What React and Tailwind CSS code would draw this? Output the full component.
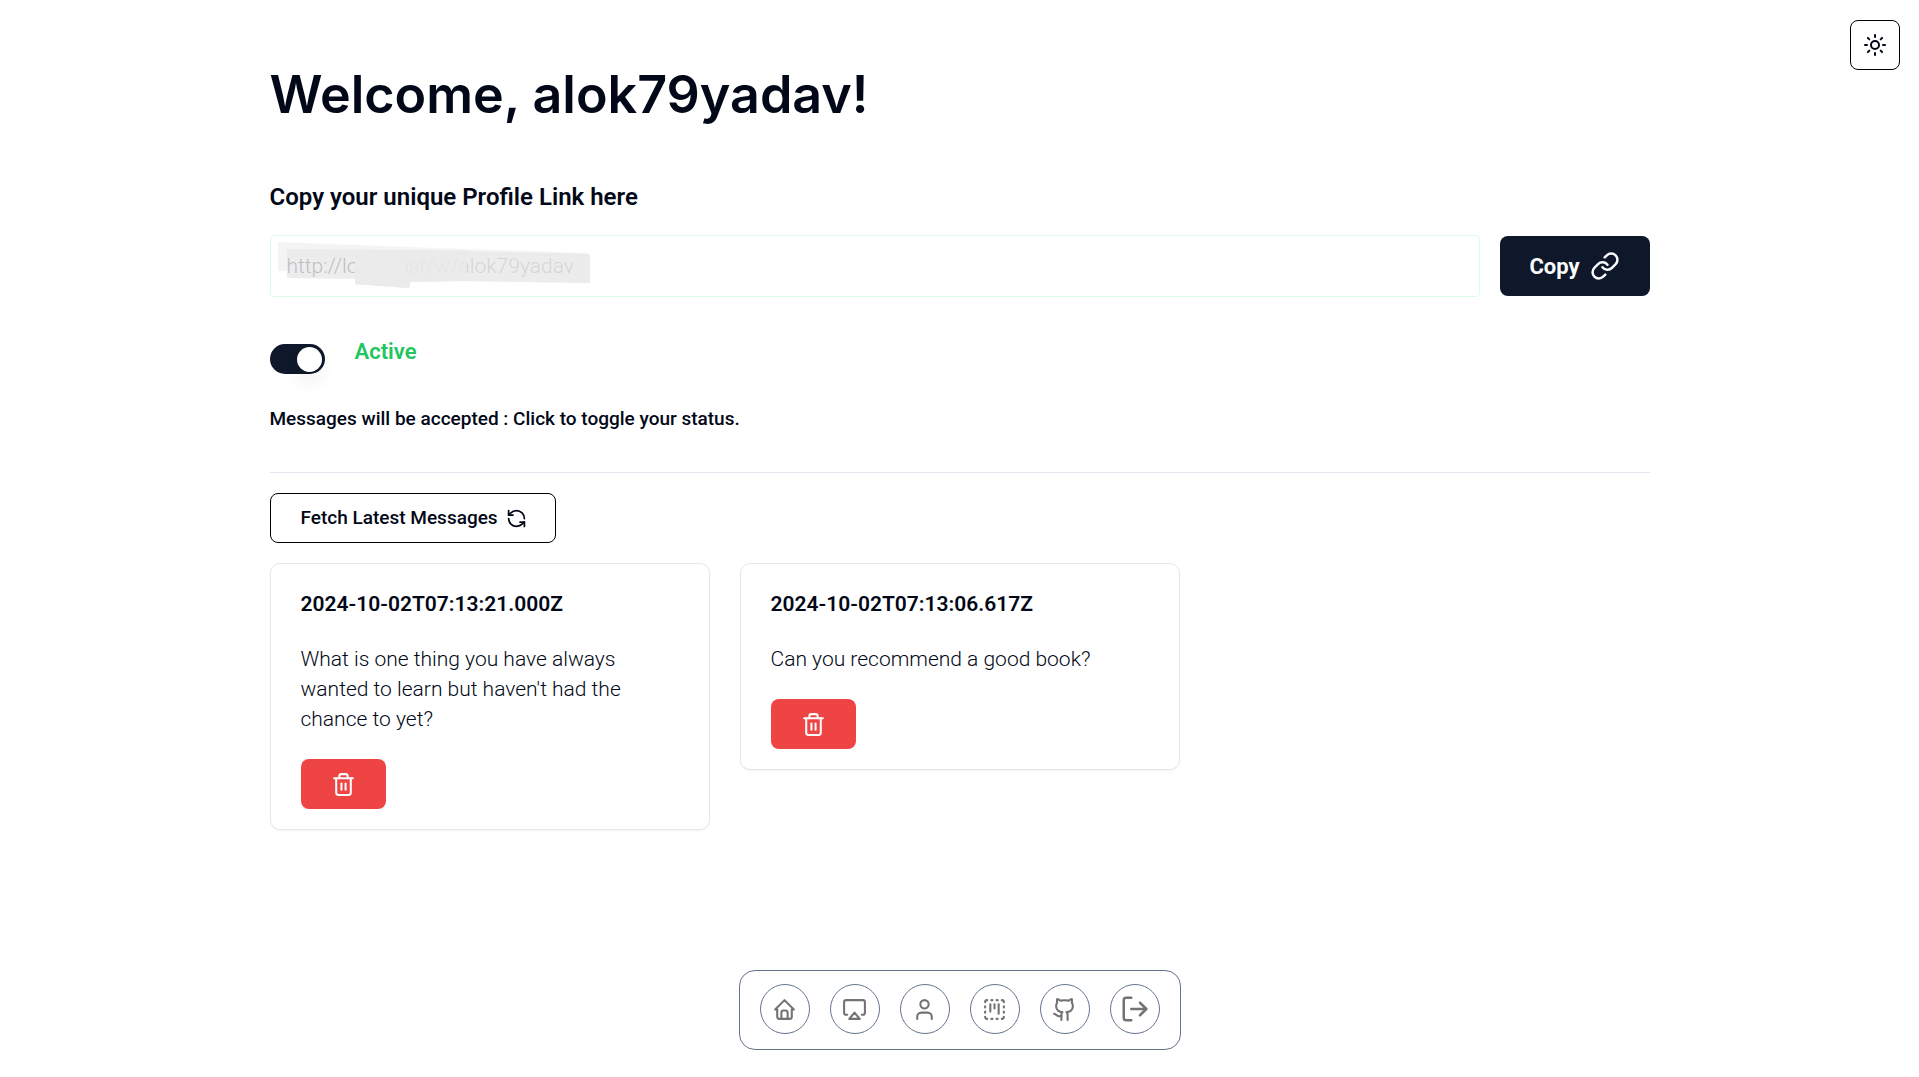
import { useState } from "react";
import {
  LuAirplay,
  LuGithub,
  LuLink,
  LuLogOut,
  LuRefreshCcw,
  LuSquareDashedKanban,
  LuSun,
  LuTrash2,
  LuUser,
} from "react-icons/lu";
import { TbHome } from "react-icons/tb";

const MESSAGES = [
  {
    date: "2024-10-02T07:13:21.000Z",
    text: "What is one thing you have always wanted to learn but haven't had the chance to yet?",
  },
  { date: "2024-10-02T07:13:06.617Z", text: "Can you recommend a good book?" },
];

const DOCK = [
  { label: "Home", Icon: TbHome, size: 25 },
  { label: "Dashboard", Icon: LuAirplay, size: 25 },
  { label: "Profile", Icon: LuUser, size: 25 },
  { label: "Board", Icon: LuSquareDashedKanban, size: 25 },
  { label: "GitHub", Icon: LuGithub, size: 25 },
  { label: "Log out", Icon: LuLogOut, size: 30 },
];

function ProfileLink() {
  return (
    <div className="relative flex-1">
      <input
        id="profile-link"
        type="text"
        readOnly
        value="http://localhost/w/alok79yadav"
        className="block h-[62px] w-full rounded border border-[#dcfce7] bg-white px-4 text-[21px] font-light text-[#020817] outline-none"
      />
      {/* Brush strokes hiding the host name */}
      <svg
        className="pointer-events-none absolute top-0 left-0"
        width="330"
        height="62"
        viewBox="0 0 330 62"
        aria-hidden="true"
      >
        <polygon points="8,7 137,12 317,18 317,21 17,22 17,36 8,36" fill="#f3f3f3" fillOpacity="0.9" />
        <polygon
          points="17,14 137,15 320,19 320,48 187,46 140,47 139,53 85,49 85,44 17,43"
          fill="#e9e9e9"
          fillOpacity="0.8"
        />
        <polygon points="85,15 320,19 320,48 187,46 140,47 139,53 85,49" fill="#ebebeb" fillOpacity="0.5" />
        <polygon points="85,15 197,15 197,46 140,47 139,53 85,49" fill="#ebebeb" fillOpacity="0.7" />
        <polygon points="85,15 133,15 133,52 85,49" fill="#ebebeb" />
      </svg>
    </div>
  );
}

function Switch({ checked, onChange }) {
  return (
    <button
      type="button"
      role="switch"
      aria-checked={checked}
      aria-label="Accept messages"
      onClick={onChange}
      className={`flex h-[30px] w-[55px] items-center rounded-full px-[3px] ${
        checked ? "justify-end bg-[#0f172a]" : "justify-start bg-[#e2e8f0]"
      }`}
    >
      <span className="size-[25px] rounded-full bg-white shadow-[0_12px_18px_rgba(0,0,0,0.06)]" />
    </button>
  );
}

function MessageCard({ date, text }) {
  return (
    <article className="rounded-[10px] border border-[#e2e8f0] bg-white px-[30px] pt-[25px] pb-5 shadow-xs">
      <h3 className="text-[21px] leading-[30px] font-semibold">{date}</h3>
      <p className="mt-[25px] text-[21px] leading-[30px] font-light">{text}</p>
      <button
        type="button"
        aria-label="Delete message"
        className="mt-[25px] flex h-[50px] w-[85px] items-center justify-center rounded-lg bg-[#ef4444] text-slate-50"
      >
        <LuTrash2 size={25} />
      </button>
    </article>
  );
}

export default function App() {
  const [active, setActive] = useState(true);
  return (
    <div className="flex min-h-screen flex-col bg-white font-['Roboto',sans-serif] text-[#020817]">
      <button
        type="button"
        aria-label="Toggle theme"
        className="absolute top-5 right-[19px] flex size-[50px] items-center justify-center rounded-lg border border-black bg-white"
      >
        <LuSun size={24} />
      </button>

      <main className="mx-auto w-full max-w-[1380px] pt-[60px]">
        <h1 className="font-['Inter',sans-serif] text-[52px] leading-[70px] font-semibold">
          Welcome, alok79yadav!
        </h1>

        <label htmlFor="profile-link" className="mt-[50px] block text-[24px] leading-[35px] font-semibold">
          Copy your unique Profile Link here
        </label>
        <div className="mt-5 flex items-center gap-5">
          <ProfileLink />
          <button
            type="button"
            className="flex h-[60px] w-[150px] items-center justify-center gap-[10px] rounded-lg bg-[#0f172a] text-[22px] font-bold text-slate-50"
          >
            Copy
            <LuLink size={30} strokeWidth={2} />
          </button>
        </div>

        <div className="mt-10 flex items-start gap-[30px]">
          <div className="pt-[7px]">
            <Switch checked={active} onChange={() => setActive(!active)} />
          </div>
          <span className="text-[22px] leading-[30px] font-semibold text-[#22c55e]">
            {active ? "Active" : "Inactive"}
          </span>
        </div>
        <p className="mt-[30px] text-[19px] leading-[30px] font-medium">
          Messages will be accepted : Click to toggle your status.
        </p>

        <hr className="mt-[38px] border-[#e2e8f0]" />

        <button
          type="button"
          className="mt-5 flex h-[50px] w-[286px] items-center gap-2 rounded-lg border border-black bg-white px-[30px] text-[19px] font-medium whitespace-nowrap"
        >
          Fetch Latest Messages
          <LuRefreshCcw size={21} className="shrink-0" />
        </button>

        <section className="mt-5 grid grid-cols-3 items-start gap-[30px]">
          {MESSAGES.map((m) => (
            <MessageCard key={m.date} {...m} />
          ))}
        </section>
      </main>

      <nav className="mx-auto mt-auto mb-[27px] flex h-[80px] items-center gap-5 rounded-2xl border border-[#64748b] bg-white px-5 pb-0.5">
        {DOCK.map(({ label, Icon, size }) => (
          <a
            key={label}
            href="#"
            aria-label={label}
            className="flex size-[50px] items-center justify-center rounded-full border border-[#64748b] text-[#737373]"
          >
            <Icon size={size} />
          </a>
        ))}
      </nav>
    </div>
  );
}
